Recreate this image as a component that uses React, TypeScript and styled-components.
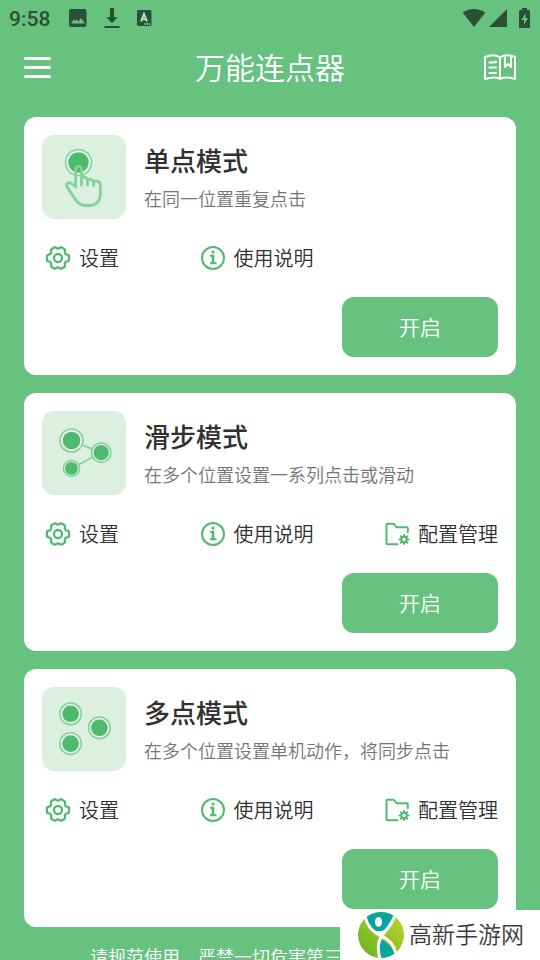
import React from "react";
import styled, { createGlobalStyle } from "styled-components";

const GREEN = "#67c27f";
const ACCENT = "#4fb96e";
const SOFT = "#86d09b";
const DARK = "#295135";

const GlobalStyle = createGlobalStyle`
  * { box-sizing: border-box; }
  html, body, #root { height: 100%; }
  body {
    margin: 0;
    overflow: hidden;
    background: ${GREEN};
    font-family: Roboto, "Noto Sans CJK SC", sans-serif;
    font-weight: 350;
    color: #303030;
  }
  button { font: inherit; border: 0; padding: 0; background: none; color: inherit; cursor: pointer; }
  svg { display: block; flex: none; }
`;

const Screen = styled.div`
  min-height: 100%;
  display: flex;
  flex-direction: column;
`;

const StatusBar = styled.div`
  height: 36px;
  padding: 0 10px 0 9px;
  display: flex;
  align-items: center;
  justify-content: space-between;
  color: ${DARK};
`;

const StatusGroup = styled.div<{ $gap: number }>`
  display: flex;
  align-items: center;
  gap: ${(p) => p.$gap}px;
`;

const Clock = styled.time`
  font-size: 21px;
  line-height: 24px;
  font-weight: 500;
  padding-top: 2px;
  margin-right: 2px;
`;

const Header = styled.header`
  display: grid;
  grid-template-columns: 33px 1fr 33px;
  align-items: center;
  height: 63px;
  padding: 0 24px;
  color: #fff;
`;

const AppTitle = styled.h1`
  margin: 0;
  padding-top: 2px;
  text-align: center;
  font-size: 30px;
  line-height: 44px;
  font-weight: 350;
`;

const CardList = styled.main`
  display: flex;
  flex-direction: column;
  gap: 18px;
  padding: 18px 24px;
`;

const Card = styled.section`
  display: flex;
  flex-direction: column;
  padding: 18px;
  border-radius: 12px;
  background: #fff;
`;

const CardHead = styled.div`
  display: flex;
  align-items: center;
  gap: 18px;
`;

const CardLabel = styled.div`
  padding-top: 6px;
`;

const Tile = styled.div`
  width: 84px;
  height: 84px;
  border-radius: 12px;
  background: #dcf0e1;
`;

const CardTitle = styled.h2`
  margin: 0;
  font-size: 26px;
  line-height: 40px;
  font-weight: 500;
`;

const CardText = styled.p`
  margin: 0;
  font-size: 18px;
  line-height: 36px;
  color: #757575;
`;

const Actions = styled.div`
  display: grid;
  grid-template-columns: 35% 40% 25%;
  align-items: center;
  height: 78px;
`;

const Action = styled.button<{ $inset?: number; $end?: boolean }>`
  display: flex;
  align-items: center;
  gap: 8px;
  margin-left: ${(p) => p.$inset ?? 0}px;
  justify-self: ${(p) => (p.$end ? "end" : "start")};
  font-size: 20px;
  line-height: 30px;
  white-space: nowrap;
`;

const ActionLabel = styled.span`
  padding-top: 2px;
`;

const StartButton = styled.button`
  && {
    align-self: flex-end;
    width: 156px;
    height: 60px;
    padding-bottom: 2px;
    border-radius: 12px;
    background: ${GREEN};
    color: #fff;
    font-size: 21px;
  }
`;

const Notice = styled.footer`
  text-align: center;
  font-size: 18px;
  line-height: 26px;
  color: #fff;
`;

const Watermark = styled.div`
  position: fixed;
  right: 0;
  bottom: 0;
  display: flex;
  align-items: center;
  gap: 5px;
  width: 200px;
  height: 50px;
  padding-left: 18px;
  background: #fff;
  color: #3b3b3b;
  font-size: 23px;
  line-height: 34px;
`;

const WatermarkText = styled.span`
  padding-top: 2px;
`;

const PictureIcon = () => (
  <svg width="20" height="20" viewBox="0 0 20 20" fill={DARK} aria-hidden="true">
    <path fillRule="evenodd" d="M3 1h13.500a2 2 0 0 1 2 2v14a2 2 0 0 1-2 2H3a2 2 0 0 1-2-2V3a2 2 0 0 1 2-2zM3 15.500H17L13 10l-2.500 3.500L8.500 11.500 7.500 13 6.300 11.300z" />
  </svg>
);

const DownloadIcon = () => (
  <svg width="16" height="22" viewBox="0 0 16 22" fill={DARK} aria-hidden="true">
    <path d="M6 1h4v9H13.800L8 16.200 2.200 10h3.800zM.5 19h15v2H.5z" />
  </svg>
);

const KeyboardIcon = () => (
  <svg width="16" height="18" viewBox="0 0 16 18" aria-hidden="true">
    <rect x="1" y="1" width="14.500" height="16" rx="1.800" fill={DARK} />
    <path d="M5 12.500 8 5l3 7.500M6 10.300h4" fill="none" stroke="#a5e8b8" strokeWidth="2" />
    <path d="M8.500 15h6" stroke="#a5e8b8" strokeWidth="1.300" strokeDasharray="1.300 .8" />
  </svg>
);

const WifiIcon = () => (
  <svg width="24" height="20" viewBox="0 0 24 20" fill={DARK} aria-hidden="true">
    <path d="M.7 4.500C7-.3 17-.3 23.300 4.500L12 19z" />
  </svg>
);

const SignalIcon = () => (
  <svg width="18" height="18" viewBox="0 0 18 18" fill={DARK} aria-hidden="true">
    <path d="M18 0v18H0z" />
  </svg>
);

const BatteryIcon = () => (
  <svg width="11" height="20" viewBox="0 0 11 20" aria-hidden="true">
    <path d="M3 0h5v2h2a1 1 0 0 1 1 1v16a1 1 0 0 1-1 1H1a1 1 0 0 1-1-1V3a1 1 0 0 1 1-1h2z" fill={DARK} />
    <path d="M6.500 5 2.500 12h2.500v5l4-7H6.500z" fill={GREEN} />
  </svg>
);

const MenuIcon = () => (
  <svg width="27" height="21" viewBox="0 0 27 21" stroke="currentColor" strokeWidth="3" strokeLinecap="round" aria-hidden="true">
    <path d="M1.500 1.500h24M1.500 10.500h24M1.500 19.500h24" />
  </svg>
);

const BookIcon = () => (
  <svg width="33" height="27" viewBox="0 0 33 27" fill="none" stroke="currentColor" strokeWidth="2" strokeLinecap="round" strokeLinejoin="round" aria-hidden="true">
    <path d="M17 3.500C13.500.8 7.500.8 2 3v22c5.500-2 11-2 15-.2 4-1.800 9.500-1.800 15 .2V3C26.500.8 20.500.8 17 3.500v21" />
    <path d="M6.500 8.500h4M6.500 13.500h6.500M6.500 19h6.500" />
    <circle cx="12.500" cy="8" r="1" fill="currentColor" strokeWidth="1" />
    <path d="M22 3.500v9.500l3-3 3 3V3.500" strokeWidth="1.800" />
  </svg>
);

const GearIcon = () => (
  <svg width="26" height="26" viewBox="0 0 26 26" fill="none" stroke={ACCENT} strokeWidth="2.300" strokeLinejoin="round" aria-hidden="true">
    <path d="M9.300 2.500Q10.200 2 10.900 2.700Q12.900 4.500 15.100 2.700Q15.800 2 16.700 2.500L19.300 4Q20.100 4.500 19.900 5.500C19.400 8 20.500 9.600 22.900 9.900Q23.900 10.100 24 11V15Q23.900 15.900 22.900 16.100C20.500 16.400 19.400 18 19.900 20.500Q20.100 21.500 19.300 22L16.700 23.500Q15.800 24 15.100 23.300Q12.900 21.500 10.900 23.300Q10.200 24 9.300 23.500L6.700 22Q5.900 21.500 6.100 20.500C6.600 18 5.500 16.400 3.100 16.100Q2.100 15.900 2 15V11Q2.100 10.100 3.100 9.900C5.500 9.600 6.600 8 6.100 5.500Q5.900 4.500 6.700 4z" />
    <circle cx="13" cy="13" r="4" />
  </svg>
);

const InfoIcon = () => (
  <svg width="26" height="26" viewBox="0 0 26 26" fill="none" stroke={ACCENT} strokeWidth="2" aria-hidden="true">
    <circle cx="13" cy="13" r="11" />
    <path d="M10 10.800h3v7.700M10 18.200h6.500" />
    <path d="M13 10v8" strokeWidth="2.600" />
    <circle cx="13" cy="7" r="1.600" fill={ACCENT} stroke="none" />
  </svg>
);

const FolderIcon = () => (
  <svg width="26" height="26" viewBox="0 0 26 26" fill="none" stroke={ACCENT} strokeWidth="2" strokeLinejoin="round" strokeLinecap="round" aria-hidden="true">
    <path d="M13.500 23.200H3.500a1 1 0 0 1-1-1V3.800a1 1 0 0 1 1-1h6.300l3 3.500h10a1 1 0 0 1 1 1V11" />
    <circle cx="20" cy="18.500" r="2.700" />
    <path d="M20 14v1M20 22v1M15.500 18.500h1M23.500 18.500h1M16.800 15.300l.8.8M22.400 20.900l.8.8M23.200 15.300l-.8.8M17.600 20.900l-.8.8" />
  </svg>
);

type Target = { x: number; y: number; ring: number; dot: number };

const Targets = ({ items }: { items: Target[] }) => (
  <>
    {items.map((t) => (
      <g key={`${t.x}-${t.y}`}>
        <circle cx={t.x} cy={t.y} r={t.ring} fill="#e4f4e8" stroke={SOFT} strokeWidth="1.600" />
        <circle cx={t.x} cy={t.y} r={t.dot} fill={ACCENT} />
      </g>
    ))}
  </>
);

const TapDrawing = () => (
  <svg width="84" height="84" viewBox="0 0 84 84" aria-hidden="true">
    <Targets items={[{ x: 36.5, y: 27.5, ring: 13, dot: 10.2 }]} />
    <path
      d="M33.700 51.500V34.200a2.900 2.900 0 0 1 5.800 0V50M39.500 41.500q5 0 6 3.500v5M45.500 44.500q5.200-.8 6.200 2.500v3.500M51.700 46.500q6.600-1.500 6.600 3.500V59C58.300 66 54 70.500 48 70.500H43.500C38.500 70.500 35.500 68 33 64L25 51.800C23.500 49 26.500 46.500 29.500 48.500L33.700 52"
      fill="none"
      stroke={SOFT}
      strokeWidth="2.900"
      strokeLinecap="round"
      strokeLinejoin="round"
    />
  </svg>
);

const SlideDrawing = () => (
  <svg width="84" height="84" viewBox="0 0 84 84" aria-hidden="true">
    <path d="M29.500 29.500 59 41.700 29.500 57.500" fill="none" stroke={SOFT} strokeWidth="1.800" />
    <Targets
      items={[
        { x: 29.5, y: 29.5, ring: 11.5, dot: 8.8 },
        { x: 59.2, y: 41.7, ring: 9.7, dot: 7.6 },
        { x: 29.5, y: 57.4, ring: 8, dot: 6.4 },
      ]}
    />
  </svg>
);

const MultiDrawing = () => (
  <svg width="84" height="84" viewBox="0 0 84 84" aria-hidden="true">
    <Targets
      items={[
        { x: 28.6, y: 26.8, ring: 10.8, dot: 8.3 },
        { x: 57.4, y: 40.8, ring: 10.8, dot: 8.3 },
        { x: 28.6, y: 56.6, ring: 10.8, dot: 8.3 },
      ]}
    />
  </svg>
);

const LogoIcon = () => (
  <svg width="46" height="46" viewBox="0 0 46 46" aria-hidden="true">
    <defs>
      <linearGradient id="leaf" x1="1" y1="0" x2="0" y2="1">
        <stop offset="0" stopColor="#c3d82c" />
        <stop offset="1" stopColor="#62b022" />
      </linearGradient>
      <clipPath id="disc"><circle cx="23" cy="23" r="23" /></clipPath>
    </defs>
    <g clipPath="url(#disc)">
      <rect width="46" height="46" fill="url(#leaf)" />
      <path d="M8 6L12-1H38C35 8 30 16 24 22C16 20 10 14 8 6z" fill="#05a59c" />
      <path d="M22 27C29 30 34 35 37 42L30 47H23C20 40 20 33 22 27z" fill="#05a59c" />
      <path d="M7 4C9 14 14 20 23 24C31 27 36 33 38 42" fill="none" stroke="#fff" strokeWidth="3" />
      <path d="M38 0C36 9 31 15 26 21C20 28 19 35 22 47" fill="none" stroke="#fff" strokeWidth="3" />
      <path d="M16 18Q21 21 28 17L24 27L20 24z" fill="#fff" />
      <ellipse cx="20.500" cy="10" rx="3.500" ry="4.900" fill="#fff" />
    </g>
  </svg>
);

const modes = [
  { title: "单点模式", text: "在同一位置重复点击", drawing: <TapDrawing />, config: false },
  { title: "滑步模式", text: "在多个位置设置一系列点击或滑动", drawing: <SlideDrawing />, config: true },
  { title: "多点模式", text: "在多个位置设置单机动作，将同步点击", drawing: <MultiDrawing />, config: true },
];

export default function App() {
  return (
    <>
      <GlobalStyle />
      <Screen lang="zh-CN">
        <StatusBar>
          <StatusGroup $gap={16}>
            <Clock>9:58</Clock>
            <PictureIcon />
            <DownloadIcon />
            <KeyboardIcon />
          </StatusGroup>
          <StatusGroup $gap={12}>
            <StatusGroup $gap={3}>
              <WifiIcon />
              <SignalIcon />
            </StatusGroup>
            <BatteryIcon />
          </StatusGroup>
        </StatusBar>
        <Header>
          <button type="button" aria-label="菜单"><MenuIcon /></button>
          <AppTitle>万能连点器</AppTitle>
          <button type="button" aria-label="教程"><BookIcon /></button>
        </Header>
        <CardList>
          {modes.map((mode) => (
            <Card key={mode.title}>
              <CardHead>
                <Tile>{mode.drawing}</Tile>
                <CardLabel>
                  <CardTitle>{mode.title}</CardTitle>
                  <CardText>{mode.text}</CardText>
                </CardLabel>
              </CardHead>
              <Actions>
                <Action type="button" $inset={3}><GearIcon /><ActionLabel>设置</ActionLabel></Action>
                <Action type="button" $inset={-2}><InfoIcon /><ActionLabel>使用说明</ActionLabel></Action>
                {mode.config && (
                  <Action type="button" $end><FolderIcon /><ActionLabel>配置管理</ActionLabel></Action>
                )}
              </Actions>
              <StartButton type="button">开启</StartButton>
            </Card>
          ))}
        </CardList>
        <Notice>请规范使用，严禁一切危害第三方利益的行为</Notice>
      </Screen>
      <Watermark>
        <LogoIcon />
        <WatermarkText>高新手游网</WatermarkText>
      </Watermark>
    </>
  );
}
